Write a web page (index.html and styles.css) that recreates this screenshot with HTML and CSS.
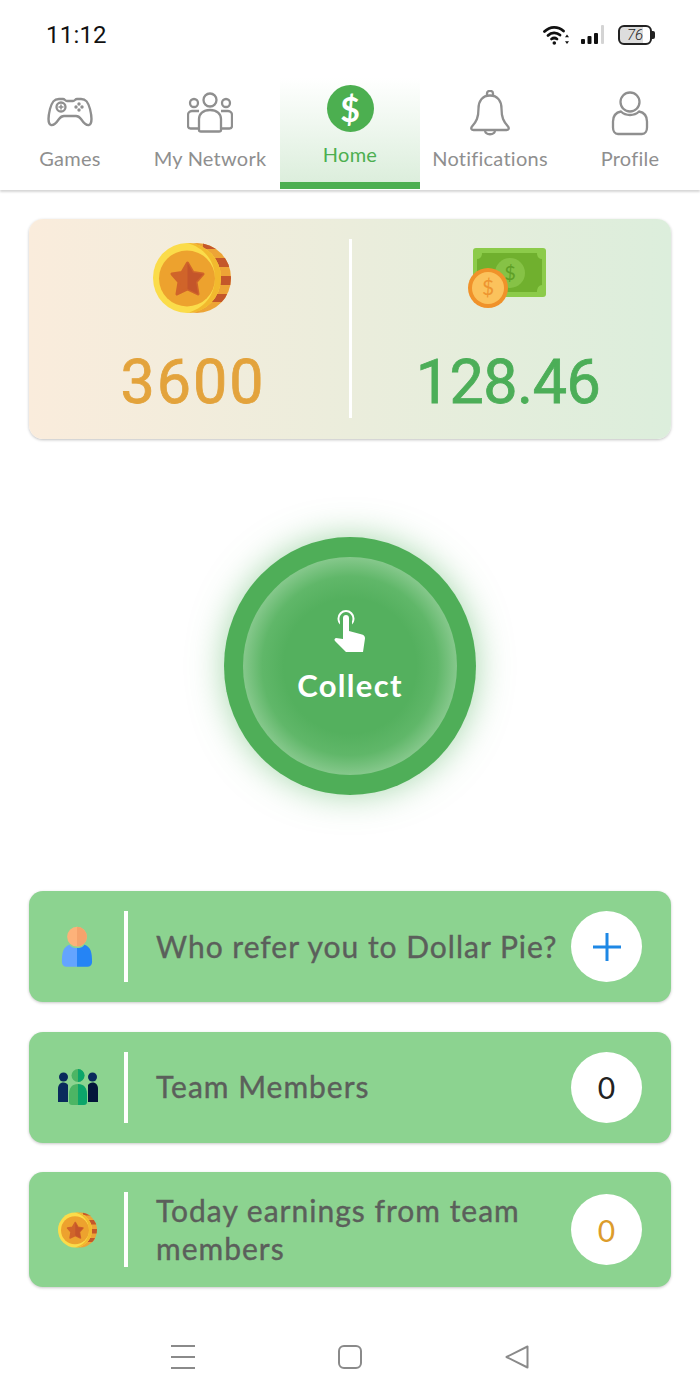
FILE: index.html
```html
<!DOCTYPE html>
<html lang="en">
<head>
    <meta charset="UTF-8">
    <meta name="viewport" content="width=device-width, initial-scale=1.0">
    <title>Dollar Pie</title>
    <link rel="stylesheet" href="styles.css">
</head>
<body>
    <svg class="defs" width="0" height="0">
        <clipPath id="coin-back">
            <ellipse cx="44" cy="35" rx="34" ry="35"/>
        </clipPath>
        <symbol id="coin" viewBox="0 0 80 70">
            <ellipse cx="44" cy="35" rx="34" ry="35" fill="#eda436"/>
            <g clip-path="url(#coin-back)" fill="#c4572a">
                <rect x="50" y="0" width="30" height="6"/>
                <rect x="50" y="15" width="30" height="9"/>
                <rect x="50" y="33" width="30" height="9"/>
                <rect x="50" y="51" width="30" height="8"/>
            </g>
            <ellipse cx="34" cy="35" rx="34" ry="35" fill="#fbdc4a"/>
            <path d="M34 0c19 0 34 16 34 35S53 70 34 70c16-4 28-17 28-35S50 4 34 0z" fill="#f2b92e"/>
            <ellipse cx="34" cy="35.500" rx="28" ry="28" fill="#eda22e"/>
            <path d="M34.500 20l5.500 9.500 10 1.500-7 8 2 12-10.500-5-10.500 5 2-12-7-8 10-1.500z" fill="#d0642a" stroke="#d0642a" stroke-width="3" stroke-linejoin="round"/>
            <path d="M34.500 20l5.500 9.500 10 1.500-7 8 2 12-10.500-5z" fill="#c4552a"/>
        </symbol>
    </svg>

    <div class="status-bar">
        <span class="time">11:12</span>
        <div class="status-icons">
            <svg width="27" height="20" viewBox="0 0 27 20" fill="none" stroke="#111" stroke-width="2.800" stroke-linecap="round">
                <path d="M1.500 6.500C7 1 15 1 20.500 6"/>
                <path d="M5 10.500c3.500-3.500 8.500-3.500 12-.5"/>
                <path d="M8.500 14c2-1.500 3.500-1.500 5.500 0"/>
                <circle cx="11.300" cy="18" r="1.800" fill="#111" stroke="none"/>
                <path d="M24 9.500l2 2.800h-4zM24 19l-2-2.800h4z" fill="#111" stroke="none"/>
            </svg>
            <svg class="signal" width="25" height="20" viewBox="0 0 25 20" fill="#111">
                <rect x="1" y="14" width="4" height="5" rx="1"/>
                <rect x="7.500" y="11" width="4" height="8" rx="1"/>
                <rect x="14" y="8" width="4" height="11" rx="1"/>
                <rect x="21" y="0" width="3" height="19" rx="1" fill="#d4d4d4"/>
            </svg>
            <div class="battery"><span class="battery-num">76</span></div>
        </div>
    </div>

    <nav class="tabs">
        <a class="tab">
            <svg class="tab-icon" width="46" height="46" viewBox="0 0 46 46" fill="none" stroke="#8f8f8f" stroke-width="2.300">
                <path d="M12 9h4c2 0 2 2 4 2h6c2 0 2-2 4-2h4c5 0 7 3 9 10 2 8 2 15-1 16-3 .5-6-3-8-6-1.500-2-3-3-5-3H17c-2 0-3.500 1-5 3-2 3-5 6.500-8 6-3-1-3-8-1-16C5 12 7 9 12 9z" stroke-linejoin="round"/>
                <circle cx="14" cy="17" r="4.500"/>
                <path d="M14 14.500v5M11.500 17h5" stroke-width="1.500"/>
                <g fill="#8f8f8f" stroke="none"><circle cx="32" cy="14" r="1.700"/><circle cx="32" cy="20" r="1.700"/><circle cx="29" cy="17" r="1.700"/><circle cx="35" cy="17" r="1.700"/></g>
            </svg>
            <span class="tab-label">Games</span>
        </a>
        <a class="tab">
            <svg class="tab-icon" width="46" height="46" viewBox="0 0 46 46" fill="none" stroke="#8f8f8f" stroke-width="2.300">
                <circle cx="23" cy="10" r="6.500"/>
                <circle cx="7" cy="13" r="4"/>
                <circle cx="39" cy="13" r="4"/>
                <path d="M12 21H5c-2.500 0-4 2-4 4v11c0 1.500 1 2.500 2.500 2.500H12M34 21h7c2.500 0 4 2 4 4v11c0 1.500-1 2.500-2.500 2.500H34"/>
                <path d="M12 40V29c0-5 4-9 11-9s11 4 11 9v11c0 1-1 1.500-2 1.500H14c-1 0-2-.5-2-1.500z"/>
            </svg>
            <span class="tab-label">My Network</span>
        </a>
        <a class="tab tab-active">
            <span class="home-badge">$</span>
            <span class="tab-label">Home</span>
        </a>
        <a class="tab">
            <svg class="tab-icon" width="46" height="46" viewBox="0 0 46 46" fill="none" stroke="#8f8f8f" stroke-width="2.300" stroke-linejoin="round">
                <path d="M20 6.500V3.500c0-3.500 6-3.500 6 0v3"/>
                <path d="M23 5.500c-8 0-11.500 6-11.500 13 0 9-2 13-6.500 18-1.500 2-.5 3.500 1.500 3.500h33c2 0 3-1.500 1.500-3.500-4.500-5-6.500-9-6.500-18 0-7-3.500-13-11.500-13z"/>
                <path d="M18 40.500c.5 5 9.500 5 10 0"/>
            </svg>
            <span class="tab-label">Notifications</span>
        </a>
        <a class="tab">
            <svg class="tab-icon" width="46" height="46" viewBox="0 0 46 46" fill="none" stroke="#8f8f8f" stroke-width="2.300">
                <circle cx="23" cy="12" r="9.500"/>
                <path d="M14 21.500c-5 1-8 4-8 10v6c0 3 1.500 6.500 5 6.500h24c3.500 0 5-3.500 5-6.500v-6c0-6-3-9-8-10-2.500 2.500-5.500 3.500-9 3.500s-6.500-1-9-3.500z" stroke-linejoin="round"/>
            </svg>
            <span class="tab-label">Profile</span>
        </a>
    </nav>

    <main class="content">
        <section class="balance">
            <div class="balance-col">
                <svg class="balance-icon" width="80" height="70"><use href="#coin"/></svg>
                <span class="balance-value value-coins">3600</span>
            </div>
            <div class="balance-divider"></div>
            <div class="balance-col balance-col-right">
                <svg class="balance-icon" width="80" height="70" viewBox="0 0 80 70">
                    <rect x="5" y="0" width="73" height="49" rx="3" fill="#8ccb4a"/>
                    <path d="M14 5h55c0 4 2 6 5 6v26c-3 0-5 3-5 7H14c0-4-2-7-5-7V11c3 0 5-2 5-6z" fill="#70b02e"/>
                    <circle cx="42" cy="25" r="15" fill="#86c246"/>
                    <text x="42" y="32" class="bill-sign">$</text>
                    <circle cx="20" cy="40" r="20" fill="#f0922a"/>
                    <circle cx="20" cy="40" r="16" fill="#fbc25c"/>
                    <text x="20" y="47" class="coin-sign">$</text>
                </svg>
                <span class="balance-value value-money">128.46</span>
            </div>
        </section>

        <button class="collect">
            <span class="collect-inner">
                <svg width="34" height="44" viewBox="0 0 34 44" fill="#fff">
                    <path d="M10 0a8.500 8.500 0 0 1 8.500 8.500c0 2.500-1 4.500-2.500 6v-3c2-5-2-9.500-6-9.500s-8 4.500-6 9.500v3C2.500 13 1.500 11 1.500 8.500A8.500 8.500 0 0 1 10 0z" transform="translate(3 0)"/>
                    <path d="M13 5c1.800 0 3 1.300 3 3v13l13 3.500c2 .5 3 2 3 4L30 42H13L2 31c-1-1.200-.5-2.500 1-3l7 1V8c0-1.700 1.200-3 3-3z"/>
                </svg>
                <span class="collect-label">Collect</span>
            </span>
        </button>

        <section class="rows">
            <div class="row">
                <div class="row-icon">
                    <svg width="32" height="42" viewBox="0 0 34 44">
                        <circle cx="17" cy="11" r="10.500" fill="#fdb27a"/>
                        <path d="M17 .5a10.500 10.500 0 0 1 0 21z" fill="#f5a36c"/>
                        <path d="M9 19.500c2 3 5 3.500 8 3.500v20H6c-3 0-5-1.500-5-5 0-10 1-16 8-18.500z" fill="#64a4ff"/>
                        <path d="M25 19.500c-2 3-5 3.500-8 3.500v20h11c3 0 5-1.500 5-5 0-10-1-16-8-18.500z" fill="#2584f5"/>
                    </svg>
                </div>
                <div class="row-divider"></div>
                <p class="row-text">Who refer you to Dollar Pie?</p>
                <div class="row-badge">
                    <svg width="30" height="30" viewBox="0 0 30 30" stroke="#1e88e5" stroke-width="3"><path d="M15 1v28M1 15h28"/></svg>
                </div>
            </div>
            <div class="row">
                <div class="row-icon row-icon-shift">
                    <svg width="40" height="36" viewBox="0 0 40 36">
                        <circle cx="5.500" cy="8" r="4.500" fill="#0a2a5c"/>
                        <circle cx="34.500" cy="8" r="4.500" fill="#0a2a5c"/>
                        <path d="M0 33V20c0-4 2-6.500 5.500-6.500 2 0 3.500 1 4.500 2.500v17z" fill="#0a2a5c"/>
                        <path d="M40 33V20c0-4-2-6.500-5.500-6.500-2 0-3.500 1-4.500 2.500v17z" fill="#04153a"/>
                        <circle cx="20" cy="6.500" r="6.500" fill="#4cb564"/>
                        <path d="M20 0a6.500 6.500 0 0 1 0 13z" fill="#0ca56a"/>
                        <path d="M20 15c-6 0-9 4-9 10v8c0 2 1 3 3 3h6z" fill="#4cb564"/>
                        <path d="M20 15c6 0 9 4 9 10v8c0 2-1 3-3 3h-6z" fill="#0ca56a"/>
                    </svg>
                </div>
                <div class="row-divider"></div>
                <p class="row-text">Team Members</p>
                <div class="row-badge badge-dark">0</div>
            </div>
            <div class="row">
                <div class="row-icon row-icon-shift">
                    <svg width="40" height="36"><use href="#coin"/></svg>
                </div>
                <div class="row-divider"></div>
                <p class="row-text">Today earnings from team members</p>
                <div class="row-badge badge-gold">0</div>
            </div>
        </section>
    </main>

    <div class="system-nav">
        <svg width="24" height="24" viewBox="0 0 24 24" stroke="#8a8a8a" stroke-width="2"><path d="M0 1h24M0 12h24M0 23h24"/></svg>
        <svg width="24" height="24" viewBox="0 0 24 24" fill="none" stroke="#8a8a8a" stroke-width="2"><rect x="1" y="1" width="22" height="22" rx="5"/></svg>
        <svg width="24" height="24" viewBox="0 0 24 24" fill="none" stroke="#8a8a8a" stroke-width="2" stroke-linejoin="round"><path d="M22.500 1.500v21L1.500 12z"/></svg>
    </div>
</body>
</html>
```

FILE: styles.css
```css
* {
    box-sizing: border-box;
}

body {
    margin: 0;
    background: #fff;
    font-family: Lato, 'Noto Sans', sans-serif;
    color: #5b5f5b;
}

.defs {
    display: block;
    height: 0;
}

.status-bar {
    height: 70px;
    padding: 0 45px 0 46px;
    display: flex;
    align-items: center;
    justify-content: space-between;
}

.time {
    font-family: Roboto, sans-serif;
    font-size: 24px;
    letter-spacing: 0.200px;
    color: #111;
}

.status-icons {
    display: flex;
    align-items: center;
    gap: 10px;
}

.signal {
    margin-right: 3px;
}

.battery {
    width: 34px;
    height: 20px;
    border: 2px solid #222;
    border-radius: 6px;
    position: relative;
    background: linear-gradient(to right, #ddd 78%, #fff 78%);
    display: flex;
    align-items: center;
    justify-content: center;
    margin-right: 3px;
}

.battery::after {
    content: "";
    position: absolute;
    right: -5px;
    top: 4px;
    width: 3px;
    height: 8px;
    background: #222;
    border-radius: 0 2px 2px 0;
}

.battery-num {
    font-family: Roboto, sans-serif;
    font-size: 15px;
    font-weight: 300;
    font-style: italic;
    color: #222;
}

.tabs {
    display: flex;
    height: 120px;
    padding-top: 8px;
    box-shadow: 0 2px 2px rgba(0, 0, 0, 0.16);
}

.tab {
    width: 140px;
    display: flex;
    flex-direction: column;
    align-items: center;
    padding-top: 12px;
    color: #8f8f8f;
}

.tab-icon {
    display: block;
    flex: none;
}

.tab-label {
    font-size: 20px;
    line-height: 24px;
    margin-top: 10px;
    letter-spacing: 0.250px;
}

.tab-active {
    padding-top: 7px;
    height: 111px;
    color: #4caf50;
    background: linear-gradient(to bottom, #fff, #dceedc);
    border-bottom: 7px solid #4caf50;
}

.home-badge {
    width: 47px;
    height: 47px;
    flex: none;
    border-radius: 50%;
    background: #4caf50;
    color: #fff;
    font-size: 34px;
    font-weight: 700;
    line-height: 47px;
    text-align: center;
}

.content {
    padding: 29px 29px 0;
}

.balance {
    height: 220px;
    padding: 20px 0 21px;
    border-radius: 14px;
    background: linear-gradient(to right, #faecdc, #dceedc);
    box-shadow: 0 1px 3px rgba(0, 0, 0, 0.25);
    display: flex;
}

.balance-col {
    width: 320px;
    flex: none;
    display: flex;
    flex-direction: column;
    align-items: center;
    padding: 4px 0 0 8px;
}

.balance-col-right {
    width: 319px;
    padding: 9px 7px 0 0;
}

.balance-divider {
    width: 3px;
    flex: none;
    background: #fff;
}

.balance-icon {
    display: block;
}

.bill-sign {
    font-family: Lato, sans-serif;
    font-size: 20px;
    fill: #5f9f26;
    text-anchor: middle;
}

.coin-sign {
    font-family: Lato, sans-serif;
    font-size: 21px;
    fill: #ee9530;
    text-anchor: middle;
}

.balance-value {
    font-family: Roboto, sans-serif;
    font-size: 61px;
    font-weight: 400;
    line-height: 60px;
    margin-top: 39px;
    letter-spacing: 2px;
    -webkit-text-stroke: 0.8px currentColor;
}

.value-coins {
    color: #e3a33c;
}

.value-money {
    color: #4cae58;
    margin-top: 34px;
    letter-spacing: -0.500px;
}

.collect {
    display: block;
    width: 252px;
    height: 258px;
    margin: 98px auto 0;
    padding: 20px 19px;
    border: none;
    border-radius: 50%;
    background: #4fae58;
    box-shadow: 0 0 34px rgba(76, 175, 87, 0.5);
    font-family: inherit;
}

.collect-inner {
    width: 100%;
    height: 100%;
    padding-top: 53px;
    border-radius: 50%;
    background: radial-gradient(closest-side, #54b05e 62%, #60b769 82%, #86c88c 100%);
    display: flex;
    flex-direction: column;
    align-items: center;
}

.collect-label {
    color: #fff;
    font-size: 31px;
    font-weight: 700;
    line-height: 36px;
    margin-top: 13px;
    letter-spacing: 1.300px;
}

.rows {
    margin-top: 96px;
    display: flex;
    flex-direction: column;
    gap: 29.700px;
}

.row {
    padding: 20px 29px 20px 0;
    background: #8cd390;
    border-radius: 14px;
    box-shadow: 0 1px 3px rgba(0, 0, 0, 0.22);
    display: flex;
    align-items: center;
}

.row-icon {
    width: 95px;
    flex: none;
    display: flex;
    justify-content: center;
}

.row-icon-shift {
    padding-left: 2px;
}

.row-icon svg {
    display: block;
}

.row-divider {
    width: 4px;
    align-self: stretch;
    flex: none;
    background: #fff;
}

.row-text {
    flex: 1;
    margin: 0 0 0 28px;
    font-size: 30px;
    line-height: 37.500px;
    letter-spacing: 1px;
    -webkit-text-stroke: 0.4px #5b5f5b;
}

.row-badge {
    width: 71px;
    height: 71px;
    flex: none;
    border-radius: 50%;
    background: #fff;
    display: flex;
    align-items: center;
    justify-content: center;
    font-size: 30px;
}

.badge-dark {
    color: #222;
}

.badge-gold {
    color: #dc9c2c;
}

.system-nav {
    margin-top: 58px;
    padding: 0 171px;
    display: flex;
    justify-content: space-between;
}
```
